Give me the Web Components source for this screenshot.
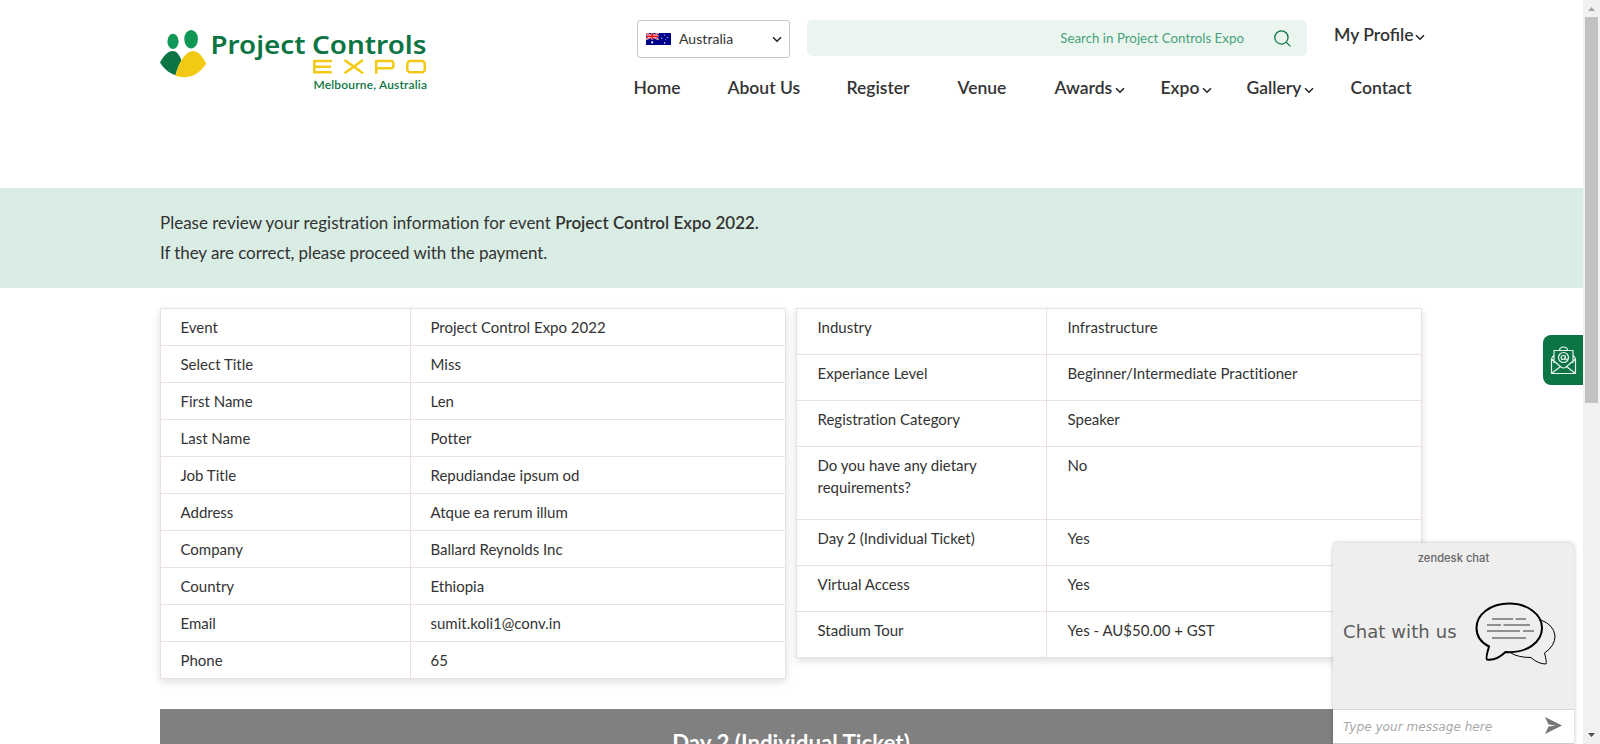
<!DOCTYPE html>
<html lang="en"><head><meta charset="utf-8"><title>Project Controls Expo</title>
<style>
html,body{margin:0;height:744px;overflow:hidden;background:#fff}
body{font-family:Lato,sans-serif;color:#333}
</style></head><body>
<expo-page></expo-page>
<script>
const define=(name,html,fill)=>customElements.define(name,class extends HTMLElement{
  connectedCallback(){
    if(this.shadowRoot)return;
    const root=this.attachShadow({mode:'open'});
    const t=document.createElement('template');t.innerHTML=html;
    root.append(t.content.cloneNode(true));
    if(fill)fill(root,this);
  }
});

define('chevron-down',`<style>:host{display:inline-block;width:10px;height:7px}svg{display:block}</style>
<svg width="10" height="7" viewBox="0 0 10 7"><path d="M1 1.2L5 5.2L9 1.2" fill="none" stroke="#222" stroke-width="1.5"/></svg>`);

define('expo-logo',`<style>
:host{display:block;width:268px;height:64px}svg{display:block;overflow:visible}
.n{font:600 26px "Noto Sans",sans-serif;fill:#0d7544}
.m{font:600 12px Lato,sans-serif;fill:#0d7544}
.e{fill:none;stroke:#f2ca14;stroke-width:2.5}
</style>
<svg width="268" height="64" viewBox="0 0 268 64">
<ellipse cx="13" cy="11.400" rx="5.6" ry="7.7" fill="#119857"/><ellipse cx="31.1" cy="9.2" rx="6.8" ry="9.3" fill="#119857"/>
<path d="M0 32.500C3 27 7 21 13 21C17 21 20 26 21.500 30.500C19 35 17 39 15.500 45.300C9 43 4 39 0 32.500Z" fill="#0d7544"/>
<path d="M15.500 45.800C18 34 25 21 33.500 21C39 21.500 43 27 46.2 33.800C42 40 35 47.200 25 47.200C21 47.200 18 46.700 15.500 45.800Z" fill="#f2ca14"/>
<text class="n" x="50.500" y="23.700" textLength="95" lengthAdjust="spacingAndGlyphs">Project</text><text class="n" x="152" y="23.700" textLength="114.500" lengthAdjust="spacingAndGlyphs">Controls</text>
<g class="e" transform="translate(0 -1.300)"><path d="M172 32.3H154.3V43.5H172M154.3 38H171"/><path d="M184.5 31.2L203 44.5M203 31.2L184.5 44.5"/><path d="M216.2 45V32.3H231Q233.5 32.3 233.5 36Q233.5 39.5 231 39.5H216.2"/><rect x="247.3" y="32.3" width="17.5" height="11.2" rx="3"/></g>
<text class="m" x="153.5" y="59" textLength="113.5">Melbourne, Australia</text>
</svg>`);

define('country-select',`<style>
:host{box-sizing:border-box;display:flex;align-items:center;width:153px;height:38px;border:1px solid #c5c5c5;border-radius:3px;padding:0 7px 0 8px;font-size:14px}
span{flex:1;padding:0 0 2px 8px;letter-spacing:.06px}svg{display:block}.flag{margin-bottom:1px}
</style>
<svg class="flag" width="25" height="12" viewBox="0 0 25 12"><path fill="#00008b" d="M0 0h25v12H0z"/><path d="M0 0L12.5 6.5M12.5 0L0 6.5" stroke="#fff" stroke-width="1.7"/><path d="M0 0L12.5 6.5M12.5 0L0 6.5" stroke="#f33" stroke-width=".9"/><path d="M6.2 0V6.5M0 3.2H12.5" stroke="#fff" stroke-width="2.2"/><path d="M6.2 0V6.5M0 3.2H12.5" stroke="#f00" stroke-width="1.5"/><g fill="#fff"><circle cx="6.2" cy="9.3" r="1.1"/><circle cx="18.7" cy="2" r=".6"/><circle cx="15.8" cy="5.2" r=".6"/><circle cx="21.8" cy="4.5" r=".6"/><circle cx="19.8" cy="6.5" r=".4"/><circle cx="18.7" cy="10" r=".7"/></g></svg>
<span>Australia</span><chevron-down></chevron-down>`);

define('search-box',`<style>
:host{box-sizing:border-box;display:flex;align-items:center;justify-content:flex-end;width:500px;height:36px;border-radius:5px;background:#ebf5f0;padding-right:16px;color:#47a27a;font-size:13.33px}
svg{margin-left:30px}
</style><span>Search in Project Controls Expo</span>
<svg width="17" height="17" viewBox="0 0 16 16" fill="none" stroke="#0d7544" stroke-width="1.2"><circle cx="7" cy="7" r="6.2"/><path d="M11.4 11.4L15.4 15.4"/></svg>`);

define('nav-item',`<style>:host{display:block;white-space:nowrap;font-weight:600;font-size:17.500px;line-height:24px}chevron-down{margin-left:var(--gap,3px)}</style><slot></slot>`,
 (root,el)=>{if(el.hasAttribute('menu'))root.append(document.createElement('chevron-down'))});

define('site-header',`<style>
:host{display:flex;height:188px;padding-left:160px;box-sizing:border-box}
expo-logo{margin-top:30px;flex:none}
.right{margin-left:205px;width:810px}
.top{display:flex;padding:20px 0 0 4px}
search-box{margin-left:17px}
.profile{margin:3px 0 0 27px;--gap:1px}
nav{display:grid;grid-template-columns:94px 119px 111px 97px 106px 86px 104px auto;margin:18px 0 0 .5px}
</style>
<expo-logo></expo-logo>
<div class="right"><div class="top"><country-select></country-select><search-box></search-box><nav-item class="profile" menu>My Profile</nav-item></div>
<nav><nav-item>Home</nav-item><nav-item>About Us</nav-item><nav-item>Register</nav-item><nav-item>Venue</nav-item><nav-item menu>Awards</nav-item><nav-item menu>Expo</nav-item><nav-item menu>Gallery</nav-item><nav-item>Contact</nav-item></nav></div>`);

define('review-banner',`<style>:host{display:block;box-sizing:border-box;height:100px;background:#d9ede4;padding:20px 160px;font-size:17px;line-height:30px;font-variant-ligatures:none}</style><slot></slot>`);

define('info-row',`<style>:host{display:grid;grid-template-columns:249px 1fr;border-bottom:1px solid #ecdfe0;min-height:var(--row,36px);font-size:15px;line-height:22px;font-variant-ligatures:none}
div{padding:7px var(--pad,19.5px) 6px}div+div{border-left:1px solid #ecdfe0}</style><div id="k"></div><div><slot></slot></div>`,
 (root,el)=>{root.getElementById('k').textContent=el.getAttribute('label')});

define('info-table',`<style>:host{display:block;width:624px;border:1px solid #ecdfe0;border-bottom:0;box-shadow:0 3px 8px rgba(0,0,0,.13)}</style><slot></slot>`);

define('ticket-heading',`<style>:host{display:block;height:60px;background:#808080;color:#fff;text-align:center;font-weight:700;font-size:22.3px;line-height:30px;padding-top:19px;font-variant-ligatures:none}</style><slot></slot>`);

define('page-scrollbar',`<style>:host{display:flex;flex-direction:column;align-items:center;width:17px;height:744px;background:#f1f1f1}
i{width:13px;height:386px;background:#c1c1c1}svg{display:block}.down{margin-top:auto}</style>
<svg width="17" height="17"><path d="M5 11L8.5 7L12 11Z" fill="#a3a3a3"/></svg><i></i><svg class="down" width="17" height="17"><path d="M5 6L8.5 10L12 6Z" fill="#505050"/></svg>`);

define('mail-tab',`<style>:host{position:absolute;left:1543px;top:335px;width:40px;height:50px;border-radius:8px 0 0 8px;background:#0d7544}svg{display:block}</style>
<svg width="40" height="50" fill="none" stroke="#e6f3ed" stroke-width="1.2" stroke-linejoin="round"><path d="M11 28V15.5H30V28M16.5 15Q17 12 20.5 12Q24 12 24.5 15M11 20L8.5 23.5V38.5H32.5V23.5L30 20M8.5 24L18 32Q20.5 34 23 32L32.5 24M8.5 38.5L17.5 31.5M32.5 38.5L23.5 31.5"/><circle cx="20.5" cy="22.5" r="5"/><circle cx="20.2" cy="22.5" r="2"/><path d="M22.2 20.5V23.5Q23 25 25 23.7"/></svg>`);

define('chat-widget',`<style>
:host{position:absolute;left:1333px;top:543px;width:241px;height:201px;display:flex;flex-direction:column;border-radius:5px 5px 0 0;background:#eee;box-shadow:0 0 4px rgba(0,0,0,.25);overflow:hidden;box-sizing:border-box}
.brand{text-align:center;font:500 11.2px/16px Inter,sans-serif;color:#666;padding-top:7px}
.body{flex:1;display:flex;align-items:center;padding:0 18px 12px 10px;justify-content:space-between;font:18px "DejaVu Sans",sans-serif;color:#5c5c5c;letter-spacing:.1px}
.body svg{margin-top:4px}
.input{height:33px;border-top:1px solid #d7d7d7;border-bottom:1px solid #ccc;background:#fff;display:flex;align-items:center;justify-content:space-between;padding:0 12px 0 10px;font:italic 12.1px "DejaVu Sans",sans-serif;color:#a9a9a9}
.input svg{margin-bottom:2px}
svg{display:block}
</style>
<div class="brand">zendesk chat</div>
<div class="body"><span>Chat with us</span><svg width="81" height="64" viewBox="0 0 81 64" fill="none" stroke="#000"><path d="M36 51Q43 55.5 56 55.5Q63 62 71 62Q72 60 69.5 51Q80 44 80 34Q79 23 66 18" stroke-width="1"/><path d="M14 44.500C5 40 1.500 33 1.500 26C1.500 12 16 1.500 34 1.500S67 12 67 26C67 40 52 51.500 30.500 50Q21 59 12 57.500Q10.500 56.500 14 44.500Z" stroke-width="2"/><path d="M17 17H38M40.500 17H51M12 23H26M28.500 23H55M12 29H45M48 29H59M17 36H51" stroke="#333" stroke-width="1.2"/></svg></div>
<div class="input"><span>Type your message here</span><svg width="17" height="17"><path d="M0 0L17 8.500L0 17L3.500 9.500L11 8.500L3.500 7.500Z" fill="#777"/></svg></div>`);

define('expo-page',`<style>
:host{display:grid;grid-template-columns:1583px 17px;position:relative;height:744px;overflow:hidden}
main{height:744px;overflow:hidden}
.tables{display:flex;gap:10px;align-items:flex-start;padding:20px 0 0 160px;height:401px}
.right{--row:45px;--pad:20.500px}
.tight{letter-spacing:-.08px}b{font-weight:600}
ticket-heading{margin:0 161px 0 160px}
</style>
<main><site-header></site-header>
<review-banner>Please review your registration information for event <b>Project Control Expo 2022.</b><br><span class="tight">If they are correct, please proceed with the payment.</span></review-banner>
<div class="tables">
<info-table><info-row label="Event">Project Control Expo 2022</info-row><info-row label="Select Title">Miss</info-row><info-row label="First Name">Len</info-row><info-row label="Last Name">Potter</info-row><info-row label="Job Title">Repudiandae ipsum od</info-row><info-row label="Address">Atque ea rerum illum</info-row><info-row label="Company">Ballard Reynolds Inc</info-row><info-row label="Country">Ethiopia</info-row><info-row label="Email">sumit.koli1@conv.in</info-row><info-row label="Phone">65</info-row></info-table>
<info-table class="right"><info-row label="Industry">Infrastructure</info-row><info-row label="Experiance Level">Beginner/Intermediate Practitioner</info-row><info-row label="Registration Category">Speaker</info-row><info-row style="--row:72px" label="Do you have any dietary requirements?">No</info-row><info-row label="Day 2 (Individual Ticket)">Yes</info-row><info-row label="Virtual Access">Yes</info-row><info-row label="Stadium Tour">Yes - AU$50.00 + GST</info-row></info-table>
</div>
<ticket-heading>Day 2 (Individual Ticket)</ticket-heading></main>
<page-scrollbar></page-scrollbar><mail-tab></mail-tab><chat-widget></chat-widget>`);
</script></body></html>
